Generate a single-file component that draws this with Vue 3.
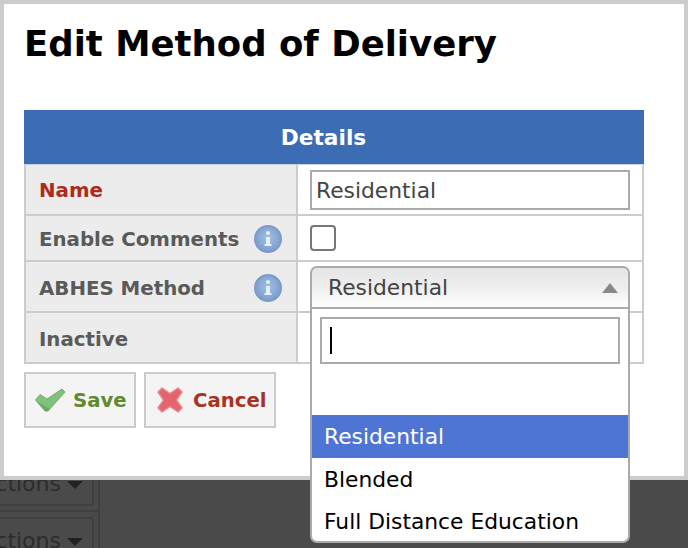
<template>
  <div class="page">
    <!-- dimmed page behind the dialog -->
    <div class="backdrop">
      <div v-for="n in 2" :key="n" class="action-cell">
        <div class="action-btn">Actions<span class="caret"></span></div>
      </div>
    </div>

    <div class="dialog">
      <h1 class="title">Edit Method of Delivery</h1>

      <div class="details">
        <div class="details-head">Details</div>
        <div class="row row-name">
          <div class="label required">Name</div>
          <div class="field"><input class="text-input" type="text" value="Residential" /></div>
        </div>
        <div class="row row-comments">
          <div class="label">
            Enable Comments
            <svg class="info" viewBox="0 0 28 28"><use href="#info-icon" /></svg>
          </div>
          <div class="field"><span class="checkbox"></span></div>
        </div>
        <div class="row row-method">
          <div class="label">
            ABHES Method
            <svg class="info" viewBox="0 0 28 28"><use href="#info-icon" /></svg>
          </div>
          <div class="field"></div>
        </div>
        <div class="row row-inactive">
          <div class="label">Inactive</div>
          <div class="field"></div>
        </div>

        <!-- open select2 style dropdown, lies over the table -->
        <div class="select">
          <div class="select-head">
            <span>Residential</span>
            <span class="arrow"></span>
          </div>
          <div class="select-drop">
            <div class="search"><span class="cursor"></span></div>
            <div class="empty-gap"></div>
            <div
              v-for="opt in options"
              :key="opt"
              class="option"
              :class="{ active: opt === selected }"
            >{{ opt }}</div>
          </div>
        </div>
      </div>

      <div class="actions">
        <button class="btn save">
          <svg class="btn-icon" viewBox="0 0 30 24">
            <path d="M0.5 12 L5 6.5 L12 11 L27 1 L30 4 L13 23 L10 23 Z" fill="#80c27c" stroke="#6fae6b" stroke-width="1" stroke-linejoin="round" />
            <path d="M1.5 13 L10.5 23 L13 23 L14.5 20 L11 19 Z" fill="#5f9c5c" opacity="0.7" />
          </svg>
          Save
        </button>
        <button class="btn cancel">
          <svg class="btn-icon" viewBox="0 0 26 26">
            <path d="M1 5 L5 1 L13 6.5 L21 1 L25 5 L19.5 13 L25 21 L21 25 L13 19.5 L5 25 L1 21 L6.5 13 Z" fill="#e5636c" stroke="#e8868c" stroke-width="1.5" stroke-linejoin="round" />
          </svg>
          Cancel
        </button>
      </div>
    </div>

    <svg class="defs" width="0" height="0">
      <defs>
        <radialGradient id="info-fill" cx="50%" cy="45%" r="55%">
          <stop offset="0%" stop-color="#a4bfe2" />
          <stop offset="100%" stop-color="#7a9dcf" />
        </radialGradient>
        <g id="info-icon">
          <circle cx="14" cy="14" r="13" fill="url(#info-fill)" stroke="#7e9bc6" stroke-width="2" />
          <circle cx="14" cy="8" r="2" fill="#e6eef8" />
          <path d="M12 12 H16 V19 H17.5 V21 H10.5 V19 H12 Z" fill="#e6eef8" />
        </g>
      </defs>
    </svg>
  </div>
</template>

<script setup>
const options = ['Residential', 'Blended', 'Full Distance Education'];
const selected = 'Residential';
</script>

<style>
html, body { margin: 0; background: #4a4a4a; }
</style>

<style scoped>
.page {
  position: relative;
  width: 688px;
  height: 548px;
  overflow: hidden;
  background: #4a4a4a;
  font-family: "DejaVu Sans", sans-serif;
}
.defs { position: absolute; }

.backdrop {
  position: absolute;
  top: 455px;
  left: -40px;
  width: 140px;
}
.action-cell {
  height: 57px;
  box-sizing: border-box;
  padding: 5px 4px 0 0;
  border-right: 2px solid #404040;
  border-bottom: 2px solid #404040;
}
.action-btn {
  display: flex;
  align-items: center;
  justify-content: flex-end;
  height: 46px;
  box-sizing: border-box;
  border: 2px solid #404040;
  padding-right: 9px;
  color: #2c2c2c;
  font-size: 22px;
  white-space: nowrap;
}
.caret {
  flex: none;
  margin: 3px 0 0 6px;
  border-left: 8px solid transparent;
  border-right: 8px solid transparent;
  border-top: 8px solid #222;
}

.dialog {
  position: absolute;
  top: 0;
  left: 0;
  width: 688px;
  height: 480px;
  box-sizing: border-box;
  background: #fff;
  border: 4px solid #ccc;
  padding: 0 40px 0 20px;
}
.title {
  margin: 18px 0 0 0;
  height: 88px;
  font-size: 35.5px;
  line-height: 44px;
  font-weight: bold;
  color: #000;
}

.details {
  position: relative;
  width: 620px;
}
.details-head {
  height: 55px;
  box-sizing: border-box;
  padding-right: 21px;
  background: #3c6cb4;
  border-bottom: 1px solid #c8d4e4;
  color: #fff;
  font-size: 21.7px;
  font-weight: bold;
  line-height: 56px;
  text-align: center;
}
.row {
  display: grid;
  grid-template-columns: 272px 1fr;
  box-sizing: border-box;
  border: 2px solid #ccc;
  border-top: 0;
}
.row-name { height: 51px; }
.row-comments { height: 46px; }
.row-method { height: 51px; }
.row-inactive { height: 51px; }
.label {
  display: flex;
  align-items: center;
  justify-content: space-between;
  padding: 2px 14px 0 13px;
  background: #ececec;
  border-right: 2px solid #ccc;
  color: #5a5a5a;
  font-size: 19.8px;
  font-weight: bold;
}
.row-method .label, .row-inactive .label { padding-top: 3px; }
.label.required { color: #b02a1c; }
.info { width: 28px; height: 28px; flex: none; filter: blur(0.4px); }
.field {
  display: flex;
  align-items: center;
  padding-left: 12px;
}
.text-input {
  width: 320px;
  height: 40px;
  box-sizing: border-box;
  border: 2px solid #aaa;
  padding: 2px 4px 0;
  font: 21.8px "DejaVu Sans", sans-serif;
  color: #444;
  outline: none;
}
.checkbox {
  width: 26px;
  height: 26px;
  box-sizing: border-box;
  border: 2px solid #777;
  border-radius: 4px;
  background: #fff;
}

.select {
  position: absolute;
  top: 156px;
  left: 286px;
  width: 320px;
  font-size: 21.8px;
}
.select-head {
  display: flex;
  align-items: center;
  justify-content: space-between;
  height: 43px;
  box-sizing: border-box;
  padding: 0 10px 0 16px;
  border: 2px solid #aaa;
  border-radius: 7px 7px 0 0;
  background: linear-gradient(#e6e6e6 0%, #eee 50%, #fff 100%);
  color: #444;
}
.arrow {
  width: 0;
  height: 0;
  border-left: 8px solid transparent;
  border-right: 8px solid transparent;
  border-bottom: 10px solid #888;
}
.select-drop {
  height: 234px;
  box-sizing: border-box;
  padding-top: 8px;
  overflow: hidden;
  background: #fff;
  border: 2px solid #aaa;
  border-top: 0;
  border-radius: 0 0 7px 7px;
}
.search {
  display: flex;
  align-items: center;
  width: 300px;
  height: 47px;
  margin-left: 8px;
  box-sizing: border-box;
  border: 2px solid #aaa;
  padding-left: 8px;
}
.cursor { width: 2px; height: 27px; background: #000; }
.empty-gap { height: 51px; }
.option {
  height: 42px;
  line-height: 44px;
  padding-left: 12px;
  color: #000;
}
.option.active {
  height: 43px;
  background: #4f75d4;
  color: #fff;
}

.actions {
  display: flex;
  gap: 8px;
  margin-top: 8px;
}
.btn {
  display: flex;
  align-items: center;
  height: 56px;
  box-sizing: border-box;
  border: 2px solid #ccc;
  background: #f4f4f4;
  font: bold 19.7px "DejaVu Sans", sans-serif;
}
.save { width: 112px; padding: 0 0 0 9px; gap: 8px; color: #5f8a2e; }
.cancel { width: 132px; padding: 0 0 0 11px; gap: 10px; color: #a83224; }
.save .btn-icon { width: 30px; height: 24px; }
.cancel .btn-icon { width: 26px; height: 26px; }
.btn-icon { flex: none; filter: blur(0.5px); }
</style>
